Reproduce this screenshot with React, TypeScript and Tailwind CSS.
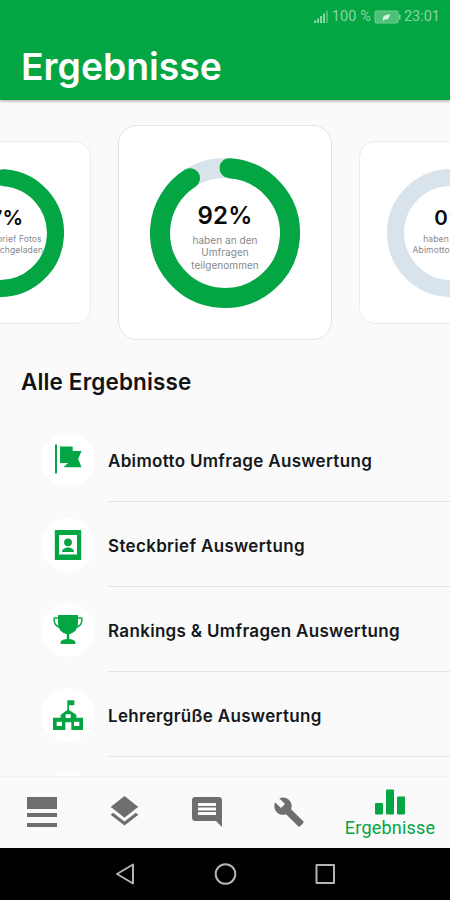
import type { ReactNode } from "react";
import { MdBuild, MdComment, MdLayers } from "react-icons/md";

function FlagIcon() {
    return (
        <svg width="28" height="32" viewBox="0 0 28 32" fill="currentColor">
            <rect x="1" y="0.500" width="2" height="29" />
            <path d="M6 2.500h12.700v4.500H27.500l-3.300 8 3.300 8.300H9.500l4.500-4.300H6z" />
        </svg>
    );
}

function PortraitIcon() {
    return (
        <svg width="28" height="32" viewBox="0 0 28 32" fill="currentColor">
            <path fillRule="evenodd" d="M1.500 1h25a.7.7 0 0 1 .7.7v28.600a.7.7 0 0 1-.7.7h-25a.7.7 0 0 1-.7-.7V1.700a.7.7 0 0 1 .7-.7zM5 6v19.500h18V6z" />
            <circle cx="14" cy="13.300" r="3.900" />
            <path d="M8 23c0-3 3-4.600 6-4.600s6 1.600 6 4.600z" />
        </svg>
    );
}

function TrophyIcon() {
    return (
        <svg width="30" height="32" viewBox="0 0 30 32" fill="currentColor">
            <path d="M6 1h18c.6 0 1 .4 1 1v7c0 6-3.500 10-8.800 11.200V25c3.800.3 6.300 1.700 6.300 3.700 0 .8-.5 1.300-1.300 1.300H8.800c-.8 0-1.300-.5-1.300-1.300 0-2 2.500-3.400 6.300-3.700v-4.800C8.500 19 5 15 5 9V2c0-.6.400-1 1-1z" />
            <path
                fill="none"
                stroke="currentColor"
                strokeWidth="1.500"
                d="M5 4H2.300c-.8 0-1.300.5-1.300 1.300C1 9 2.800 11.800 6.300 13.200M25 4h2.700c.8 0 1.300.5 1.300 1.300 0 3.700-1.800 6.500-5.300 7.900"
            />
        </svg>
    );
}

function SchoolIcon() {
    return (
        <svg width="30" height="30" viewBox="0 0 90 90" fill="currentColor">
            <path
                fillRule="evenodd"
                d="M43 1h21v15H48v14l22 14v9h20v37H55V67H37v23H0V53h23v-9l20-14zM38 43v11h15V43zM11 65v13h16V65zM63 65v13h16V65z"
            />
        </svg>
    );
}

function ListIcon() {
    return (
        <svg width="30" height="30" viewBox="0 0 30 30" fill="currentColor">
            <path d="M0 0h30v12H0zM0 16h30v4H0zM0 26h30v4H0z" />
        </svg>
    );
}

function BarsIcon() {
    return (
        <svg width="30" height="26" viewBox="0 0 30 26" fill="currentColor">
            <rect y="14" width="8" height="11.500" rx="1" />
            <rect x="11" y="0.500" width="8" height="25" rx="1" />
            <rect x="22" y="7.500" width="8" height="18" rx="1" />
        </svg>
    );
}

// the rounded caps start a little after twelve o'clock
function Ring({ percent, size }: { percent: number; size: number }) {
    const length = 2 * Math.PI * 65;
    return (
        <svg className="col-start-1 row-start-1" width={size} height={size} viewBox="0 0 150 150" fill="none" strokeWidth="20">
            <circle cx="75" cy="75" r="65" stroke="#d9e3eb" />
            {percent > 0 && (
                <circle
                    cx="75"
                    cy="75"
                    r="65"
                    stroke="#04a543"
                    strokeLinecap="round"
                    strokeDasharray={`${(length * (percent - 2.3)) / 100} ${length}`}
                    transform="rotate(-86 75 75)"
                />
            )}
        </svg>
    );
}

type Stat = { percent: number; lines: string[]; active?: boolean };

const STATS: Stat[] = [
    { percent: 97, lines: ["der Steckbrief Fotos", "wurden hochgeladen"] },
    { percent: 92, lines: ["haben an den", "Umfragen", "teilgenommen"], active: true },
    { percent: 0, lines: ["haben an der", "Abimotto Umfrage"] },
];

function StatCard({ percent, lines, active }: Stat) {
    return (
        <div
            className={
                active
                    ? "grid h-[215px] w-[214px] shrink-0 place-items-center rounded-[19px] border border-[#d9e7ef] bg-white"
                    : "grid h-[183px] w-[183px] shrink-0 place-items-center rounded-[16px] border border-[#e9ebec] bg-white"
            }
        >
            <Ring percent={percent} size={active ? 150 : 128} />
            <div className={active ? "col-start-1 row-start-1 pt-[7px] text-center whitespace-nowrap" : "col-start-1 row-start-1 pb-[5px] text-center whitespace-nowrap"}>
                <div
                    className={
                        active
                            ? "text-[24px] leading-[30px] font-semibold tracking-[0.2px] text-[#090909]"
                            : "pl-[2px] text-[20.5px] leading-[26px] font-semibold tracking-[0.2px] text-[#090909]"
                    }
                >
                    {percent}%
                </div>
                <div
                    className={
                        active
                            ? "mt-[3px] text-[10px] leading-[12.2px] tracking-[0.05px] text-[#85898c]"
                            : "mt-[3px] text-[8.5px] leading-[10.8px] tracking-[0.15px] text-[#85898c]"
                    }
                >
                    {lines.map((line) => (
                        <div key={line}>{line}</div>
                    ))}
                </div>
            </div>
        </div>
    );
}

const RESULTS: { title: string; icon: ReactNode }[] = [
    { title: "Abimotto Umfrage Auswertung", icon: <FlagIcon /> },
    { title: "Steckbrief Auswertung", icon: <PortraitIcon /> },
    { title: "Rankings & Umfragen Auswertung", icon: <TrophyIcon /> },
    { title: "Lehrergrüße Auswertung", icon: <SchoolIcon /> },
    { title: "", icon: null },
];

function StatusBar() {
    return (
        <div className="flex h-8 items-center justify-end gap-[3px] pt-px pr-[10px] font-[Roboto,sans-serif] text-[14.500px] text-[#8ad6a5]">
            <svg width="15" height="14" viewBox="0 0 15 14" fill="currentColor">
                <path d="M0 10.500h2v2.500H0zM3 8.500h2V13H3zM6 6h2v7H6zM9 3.500h2V13H9z" />
                <path opacity=".5" d="M12 0.500h2V13h-2z" />
            </svg>
            <span className="tracking-[0.1px]">100 %</span>
            <svg width="27" height="14" viewBox="0 0 27 14">
                <rect x="1" y="1" width="23" height="12" rx="1" fill="#4dbf79" stroke="#75cf95" />
                <path d="M25 4.500h1.500v5H25z" fill="#8ad6a5" />
                <path d="M9 10c-1-3 1-5 7-6-.5 4-2 6-5 5.500L9.500 11z" fill="#d4f2dd" />
            </svg>
            <span>23:01</span>
        </div>
    );
}

export default function App() {
    return (
        <div className="flex h-[900px] w-[450px] flex-col overflow-hidden bg-[#fafafa] font-[Inter,sans-serif]">
            <header className="z-10 h-[100px] shrink-0 bg-[#04a543] shadow-[0_1px_3px_rgba(0,0,0,0.35)]">
                <StatusBar />
                <h1 className="pt-[11px] pl-[21px] text-[37.3px] leading-[48px] font-semibold text-white">Ergebnisse</h1>
            </header>

            <main className="min-h-0 flex-1 overflow-hidden">
                <div className="mt-[25px] flex h-[215px] items-center justify-center gap-[27px]">
                    {STATS.map((stat) => (
                        <StatCard key={stat.percent} {...stat} />
                    ))}
                </div>

                <h2 className="mt-[27px] pl-[21px] text-[22.5px] leading-[30px] font-semibold tracking-[0.15px] text-[#111315]">Alle Ergebnisse</h2>

                <ul className="mt-[20px]">
                    {RESULTS.map(({ title, icon }) => (
                        <li key={title} className="flex h-[85px] pl-[41px]">
                            <div className="mt-[16px] flex size-[54px] items-center justify-center rounded-full bg-white text-[#04a543]">
                                {icon}
                            </div>
                            <div className="ml-[13px] flex flex-1 items-center border-b border-[#dce6ed] pt-[5px] text-[17px] font-semibold tracking-[0.32px] text-[#15181a]">
                                {title}
                            </div>
                        </li>
                    ))}
                </ul>
            </main>

            <nav className="grid h-[72px] shrink-0 grid-cols-[83px_83px_82px_82px_120px] place-items-center border-t border-[#f2f2f2] bg-[#fafafa] pb-[2px] text-[#6e6e6e]">
                <ListIcon />
                <MdLayers size={37} />
                <MdComment size={36} />
                <MdBuild size={32} />
                <div className="flex flex-col items-center pt-[7px] text-[#04a543]">
                    <BarsIcon />
                    <span className="font-[Roboto,sans-serif] text-[18px] leading-[26px] tracking-[0.2px]">Ergebnisse</span>
                </div>
            </nav>

            <div className="flex h-[52px] shrink-0 items-center justify-center bg-black">
                <svg width="220" height="24" viewBox="0 0 220 24" fill="none" stroke="#b4b4b4" strokeWidth="2" strokeLinejoin="round">
                    <path d="M2 12 18 2.500v19z" />
                    <circle cx="110.500" cy="12" r="9.800" />
                    <rect x="201.500" y="3" width="17.500" height="18" />
                </svg>
            </div>
        </div>
    );
}
